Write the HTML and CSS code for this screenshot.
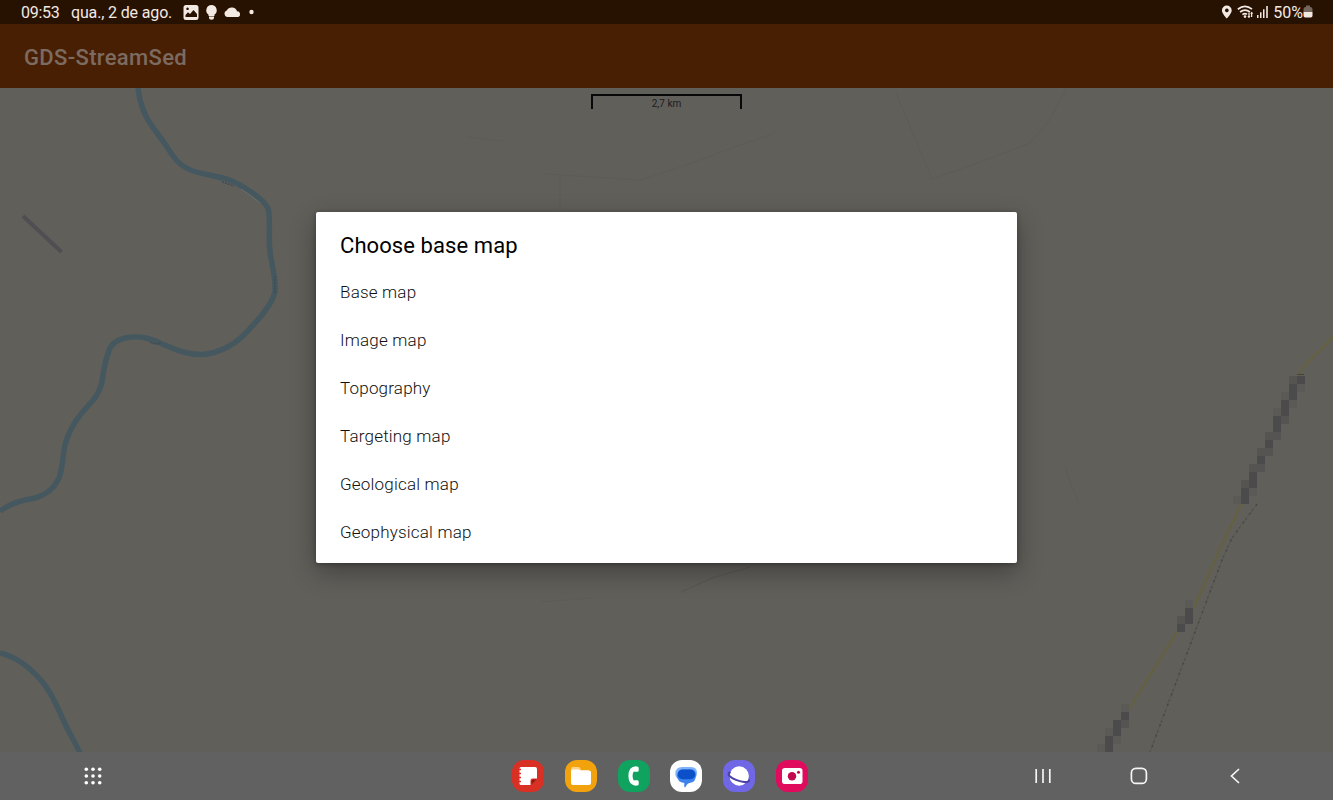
FILE: index.html
```html
<!DOCTYPE html>
<html lang="pt-BR">

<head>
  <meta charset="utf-8">
  <title>GDS-StreamSed</title>
  <link rel="stylesheet" href="styles.css">
</head>

<body>

<div class="status-bar">
  <div class="status-left">
    <span class="clock">09:53</span>
    <span class="date">qua., 2 de ago.</span>
    <svg class="status-icons" width="74" height="24" viewBox="0 0 74 24">
      <path fill-rule="evenodd" d="M4 5h10q2.500 0 2.500 2.500v10q0 2.500-2.500 2.500h-10q-2.500 0-2.500-2.500v-10q0-2.500 2.500-2.500zM3.500 17h11.500v-3l-3.500-4-3.500 4-2-1.800-2.500 2.800zM5.500 7.500a1.300 1.300 0 1 0 .1 0z"/>
      <path d="M29.500 5a5.300 5.300 0 0 1 3 9.600v1.400h-6v-1.400a5.300 5.300 0 0 1 3-9.600zM27 16.500h5v1.500q0 1.700-2.500 1.700t-2.500-1.700z"/>
      <path d="M45 17a3.400 3.400 0 0 1-.3-6.500 5.700 5.700 0 0 1 10.400.7 3 3 0 0 1 1.100 5.800z"/>
      <circle cx="69.500" cy="12" r="2.200"/>
    </svg>
  </div>
  <div class="status-right">
    <svg class="status-icons" width="50" height="24" viewBox="0 0 50 24">
      <path fill-rule="evenodd" d="M6.800 5.500a4.900 4.900 0 0 1 4.900 4.900c0 3-4.900 8-4.900 8s-4.900-5-4.900-8a4.900 4.900 0 0 1 4.900-4.900zM6.800 8.500a1.900 1.900 0 1 0 .1 0z"/>
      <g class="stroke">
        <path d="M17.800 9.200q7.200-5.500 14.200 0M20.100 12q4.900-3.700 9.800 0M22.400 14.600q2.600-1.900 4.600-.2"/>
        <path d="M29 12.800v4.700M31.600 12.200v4.700" stroke-width="1.300"/>
      </g>
      <circle cx="25" cy="16.600" r="1.300"/>
      <path d="M27.300 16l1.700 2 1.400-2zM30.200 13.700l1.400-2 1.600 2z"/>
      <path d="M37 15h1.500v3H37zM40 12.300h1.500v5.700H40zM43 9.300h1.500v8.700H43zM46.200 6h1.600v12h-1.600z"/>
    </svg>
    <span class="battery-level">50%</span>
    <svg class="status-icons" width="10" height="24" viewBox="0 0 10 24">
      <path class="battery-empty" d="M3 5.500h4v1.500q2.500 0 2.500 2v3h-9v-3q0-2 2.500-2z"/>
      <path d="M.5 12h9v3.800q0 1.700-1.700 1.700h-5.600q-1.700 0-1.700-1.700z"/>
    </svg>
  </div>
</div>

<header class="app-bar">
  <h1 class="app-title">GDS-StreamSed</h1>
</header>

<main class="map">
  <svg class="map-canvas" width="1333" height="664" viewBox="0 88 1333 664">
    <!-- rivers -->
    <g class="river">
      <path d="M138 86C139 103 144 116 154 129C162 139 167 147 173 156C178 163 184 168 193 171C208 176 225 176 238 184C250 191 262 198 268 208C271 219 268 234 270 251C271 263 276 275 275 292C271 307 257 321 243 336C232 346 218 353 203 354.500C187 355 174 349 160 343C151 339 141 336 132 337C119 338 110 343 108 354C105 362 103 374 102 382C99 397 89 404 81 414C73 424 68 433 65 445C62 458 63 471 58 480C53 490 46 495 35 498C21 500 11 503 0 511"/>
      <path d="M0 653C17 657 32 669 44 684C55 698 60 714 67 728C71 736 76 744 80 753"/>
    </g>
    <path class="river-bank" d="M241 189Q252 196 260 203"/>
    <path class="river-silt" d="M150 342q4 3 11 1M275 276v17M222 182l12 4"/>
    <path class="airstrip" d="M23 216L61.500 252"/>

    <!-- faint tracks -->
    <g class="track">
      <path d="M545 174L640 180L681 167L737 146L775 133"/>
      <path d="M896 93L932 179L975 164L1030 143L1048 122L1066 89"/>
      <path d="M466 137L505 141M541 602L592 598M560 176v34M1065 466L1072 487L1079 503"/>
      <path d="M681 592L712 578L750 567" class="track-dark"/>
    </g>

    <!-- road and railway -->
    <path class="road" d="M1334 336L1303 367L1298 378M1241 504L1220 549L1194 608L1177 632L1129 709"/>
    <path class="rail-bed" d="M1257 504L1232 538L1222 560L1150 752"/>
    <path class="rail" d="M1257 504L1232 538L1222 560L1150 752"/>
    <path class="rail-end" d="M1297 374.500h7"/>

    <!-- low resolution tiles, 8px cells -->
    <path class="cell cell-light" d="M1297 384h8v8h-8zM1281 392h8v8h-8zM1289 400h8v8h-8zM1273 408h8v8h-8zM1249 488h8v8h-8zM1233 496h8v8h-8zM1185 600h8v8h-8zM1121 704h8v8h-8zM1105 728h8v8h-8zM1113 736h8v8h-8zM1097 744h8v8h-8z"/>
    <path class="cell cell-mid" d="M1289 376h8v8h-8zM1281 416h8v8h-8zM1265 432h16v8h-16zM1257 448h16v8h-16zM1249 464h16v8h-16zM1241 480h8v8h-8zM1177 616h8v8h-8zM1121 720h8v8h-8z"/>
    <path class="cell cell-dark" d="M1297 376h8v8h-8zM1289 384h8v16h-8zM1281 400h8v16h-8zM1273 416h8v16h-8zM1265 440h8v8h-8zM1257 456h8v8h-8zM1249 472h8v16h-8zM1241 488h8v16h-8zM1185 608h8v16h-8zM1177 624h8v8h-8zM1121 712h8v8h-8zM1113 720h8v16h-8zM1105 736h8v16h-8z"/>
  </svg>

  <div class="scale-bar">2,7 km</div>

  <section class="dialog">
    <h2 class="dialog-title">Choose base map</h2>
    <ul class="dialog-list">
      <li>Base map</li>
      <li>Image map</li>
      <li>Topography</li>
      <li>Targeting map</li>
      <li>Geological map</li>
      <li>Geophysical map</li>
    </ul>
  </section>
</main>

<nav class="nav-bar">
  <div class="nav-side">
    <svg class="apps-icon" width="18" height="18" viewBox="0 0 18 18">
      <g>
        <circle cx="2.300" cy="2.300" r="1.800"/><circle cx="9" cy="2.300" r="1.800"/><circle cx="15.700" cy="2.300" r="1.800"/>
        <circle cx="2.300" cy="9" r="1.800"/><circle cx="9" cy="9" r="1.800"/><circle cx="15.700" cy="9" r="1.800"/>
        <circle cx="2.300" cy="15.700" r="1.800"/><circle cx="9" cy="15.700" r="1.800"/><circle cx="15.700" cy="15.700" r="1.800"/>
      </g>
    </svg>
  </div>

  <div class="dock">
    <svg class="app notes" viewBox="0 0 32 32">
      <path d="M9 7h14q2 0 2 2v9.500h-4.500q-2 0-2 2V25H9q-1.500 0-1.500-1.500V8.500Q7.500 7 9 7z"/>
      <path class="notes-fold" d="M19.500 24.500v-3q0-2 2-2H24.500z"/>
      <path class="notes-rings" d="M6.500 9.500h2.500M6.500 13.500h2.500M6.500 17.500h2.500M6.500 21.500h2.500"/>
    </svg>
    <svg class="app files" viewBox="0 0 32 32">
      <path class="files-tab" d="M6 12V9q0-2 2-2h5q1.500 0 2 1l1 2h8v4H6z"/>
      <path d="M8 9.500h5.500q1 0 1.500 1h9q2 0 2 2V23q0 2-2 2H8q-2 0-2-2V11.500q0-2 2-2z"/>
    </svg>
    <svg class="app phone" viewBox="0 0 32 32">
      <path class="handset" d="M18 8.700q-5.500 0-5.500 7.300t5.500 7.300"/>
      <rect x="15.500" y="6.500" width="5.200" height="5.200" rx="1.500"/>
      <rect x="15.500" y="20.300" width="5.200" height="5.200" rx="1.500"/>
    </svg>
    <svg class="app messages" viewBox="0 0 32 32">
      <path class="bubble-back" d="M12 7h9q6 0 6 6 0 2-1 4L9 19.500Q5.300 17.500 5.300 13.500 5.500 7 12 7z"/>
      <path class="bubble-mid" d="M12.500 9.500H21q5 0 5 5.500 0 7.500-6.500 8-1.500.3-2.500 1.500l-1.700 2.700q-.8.500-1-.5V23Q7 22 7 15.500q.5-6 5.500-6z"/>
      <rect class="bubble-front" x="7.700" y="9.500" width="17.500" height="9.700" rx="4.800"/>
    </svg>
    <svg class="app browser" viewBox="0 0 32 32">
      <circle cx="16.200" cy="16" r="9.700"/>
      <path class="orbit-gap" d="M7.500 12Q4 13.500 7 16.500Q12 20.500 21 22Q27 22.500 26 19.500"/>
    </svg>
    <svg class="app camera" viewBox="0 0 32 32">
      <rect x="6" y="8" width="20.500" height="16" rx="2.800"/>
      <circle class="lens" cx="16" cy="16.300" r="4.200"/>
      <circle class="lens" cx="22.500" cy="12.300" r="1.500"/>
    </svg>
  </div>

  <div class="nav-side nav-keys">
    <svg width="18" height="18" viewBox="0 0 18 18"><path d="M2.200 2v14M9 2v14M15.800 2v14"/></svg>
    <svg width="18" height="18" viewBox="0 0 18 18"><rect x="1.400" y="1.400" width="15" height="15" rx="4.500"/></svg>
    <svg width="18" height="18" viewBox="0 0 18 18"><path d="M13 2L5.500 9L13 16"/></svg>
  </div>
</nav>

</body>

</html>
```

FILE: styles.css
```css
html, body {
  height: 100%;
}

body {
  display: flex;
  flex-direction: column;
  margin: 0;
  overflow: hidden;
  background: #615f5a;
  font-family: Roboto, "Liberation Sans", sans-serif;
}

/* status bar */

.status-bar {
  display: flex;
  justify-content: space-between;
  height: 24px;
  box-sizing: border-box;
  padding: 0 20px 0 21px;
  background: #271101;
  color: #f3e9e3;
  font-size: 16px;
  line-height: 25px;
}

.status-left, .status-right {
  display: flex;
  align-items: center;
}

.clock {
  width: 50px;
  letter-spacing: -0.3px;
}

.date {
  width: 111px;
  white-space: nowrap;
  letter-spacing: -0.15px;
}

.status-icons {
  flex: none;
  fill: #f3e9e3;
}

.status-icons .stroke {
  fill: none;
  stroke: #f3e9e3;
  stroke-width: 1.7;
}

.status-icons .battery-empty {
  fill: #75665d;
}

.battery-level {
  margin-left: 3px;
}

/* app bar */

.app-bar {
  display: flex;
  align-items: center;
  height: 64px;
  box-sizing: border-box;
  padding: 2px 24px 0;
  background: #491f04;
}

.app-title {
  margin: 0;
  color: #7c6b60;
  font-size: 22px;
  font-weight: 500;
  letter-spacing: 0.34px;
}

/* map */

.map {
  position: relative;
  flex: 1;
  display: flex;
  flex-direction: column;
  align-items: center;
}

.map-canvas {
  position: absolute;
  top: 0;
  left: 0;
}

.map-canvas path {
  fill: none;
}

.river {
  stroke: #46585f;
  stroke-width: 5.5;
}

.map-canvas .river-bank {
  stroke: #65716f;
  stroke-width: 1;
}

.river-silt {
  stroke: #3f4c50;
  stroke-width: 1.5;
  stroke-dasharray: 2 1;
}

.map-canvas .airstrip {
  stroke: #514d53;
  stroke-width: 4;
}

.track {
  stroke: #5c5a57;
  stroke-width: 0.8;
}

.track-dark {
  stroke: #555450;
}

.road {
  stroke: #65613f;
  stroke-width: 2;
}

.rail-bed {
  stroke: #5a5854;
  stroke-width: 1;
}

.rail {
  stroke: #484642;
  stroke-width: 1.5;
  stroke-dasharray: 2 5 1 3;
}

.rail-end {
  stroke: #45433b;
}

.map-canvas .cell-light {
  fill: #5b5a57;
}

.map-canvas .cell-mid {
  fill: #555453;
}

.map-canvas .cell-dark {
  fill: #4b4b4b;
}

.scale-bar {
  position: relative;
  width: 151px;
  height: 15px;
  box-sizing: border-box;
  margin-top: 6px;
  border: 2px solid #080808;
  border-bottom: none;
  color: #1c1b1a;
  font-size: 10px;
  line-height: 15px;
  text-align: center;
}

/* dialog */

.dialog {
  position: relative;
  width: 701px;
  height: 351px;
  box-sizing: border-box;
  margin-top: 103px;
  padding: 20px 24px 0;
  border-radius: 2px;
  background: #fff;
  box-shadow: 0 9px 26px rgba(0, 0, 0, 0.32), 0 1px 5px rgba(0, 0, 0, 0.3);
}

.dialog-title {
  margin: 0 0 8px;
  color: #000;
  font-size: 22px;
  font-weight: 450;
  line-height: 28px;
  letter-spacing: 0.08px;
}

.dialog-list {
  margin: 0;
  padding: 0;
  list-style: none;
}

.dialog-list li {
  height: 48px;
  color: #111;
  font-size: 17px;
  font-weight: 350;
  line-height: 48px;
  letter-spacing: 0.2px;
}

/* navigation bar */

.nav-bar {
  display: flex;
  align-items: center;
  justify-content: space-between;
  height: 48px;
  background: #616161;
}

.nav-side {
  display: flex;
  width: 291px;
}

.nav-side svg {
  fill: none;
  stroke: #f5f5f5;
  stroke-width: 1.7;
}

.nav-side .apps-icon {
  margin-left: 84px;
  fill: #fff;
  stroke: none;
}

.nav-keys {
  gap: 78px;
  width: 299px;
}

.dock {
  display: flex;
  gap: 20.7px;
  margin-right: 5px;
}

.app {
  width: 32px;
  height: 32px;
  border-radius: 12px;
  fill: #fff;
}

.notes {
  background: #d93025;
}

.notes-fold {
  fill: #8f1a14;
}

.notes-rings {
  stroke: #d93025;
  stroke-width: 1.4;
}

.files {
  background: #f2a20c;
}

.files-tab {
  fill: #fbd48a;
}

.phone {
  background: #0fa35f;
}

.handset {
  fill: none;
  stroke: #fff;
  stroke-width: 4.2;
}

.messages {
  background: #fff;
}

.bubble-back {
  fill: #7fb2f8;
}

.bubble-mid {
  fill: #3d83ee;
}

.bubble-front {
  fill: #0b50c8;
}

.browser {
  background: #6f67e5;
}

.orbit-gap {
  fill: none;
  stroke: #4c43a8;
  stroke-width: 2.2;
}

.camera {
  background: #e00b5c;
}

.lens {
  fill: #c2094e;
}
```
